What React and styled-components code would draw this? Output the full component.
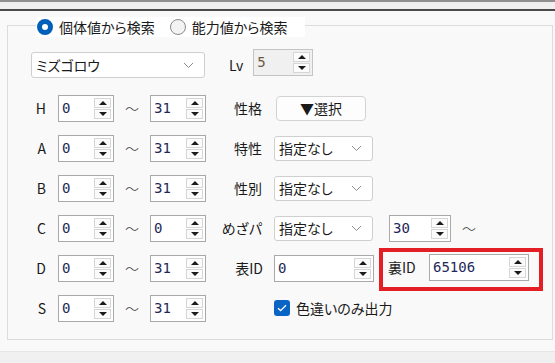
import React from "react";
import styled, { createGlobalStyle } from "styled-components";

const GlobalStyle = createGlobalStyle`
  html, body { margin: 0; padding: 0; background: #f0f0f0; }
  body {
    font-family: "Noto Sans CJK JP", "Noto Sans", sans-serif;
    font-size: 14px;
    color: #1a1a1a;
    font-feature-settings: "palt";
  }
  * { box-sizing: border-box; }
`;

const Window = styled.div`
  width: 555px;
  height: 363px;
  display: flex;
  flex-direction: column;
  overflow: hidden;
`;

const TopChrome = styled.div`
  height: 11px;
  background: #efefef;
  border-top: 2px solid #8f8f8f;
  border-bottom: 2px solid #4a4a4a;
`;

const Panel = styled.div`
  height: 340px;
  background: #f9f9f9;
  padding: 14px 2px 0 7px;
`;

const StatusStrip = styled.div`
  flex: 1;
  border-top: 1px solid #e6e6e6;
  background: #f0f0f0;
`;

const GroupBox = styled.div`
  position: relative;
  height: 315px;
  border: 1px solid #dcdcdc;
  padding: 19px 0 0 23px;
`;

const Legend = styled.div`
  position: absolute;
  left: 28px;
  top: -9px;
  height: 20px;
  background: #ffffff;
  display: flex;
  align-items: center;
  padding: 0 18px 0 1px;
`;

const RadioLabel = styled.label`
  display: flex;
  align-items: center;
  gap: 6px;
  margin-right: ${(p) => (p.$last ? 0 : 15)}px;
  line-height: 1;
  white-space: nowrap;
`;

const RadioCircle = styled.span`
  width: 16px;
  height: 16px;
  border-radius: 50%;
  flex: none;
  ${(p) =>
    p.$checked
      ? `background: #fff; border: 5px solid #005fb8;`
      : `background: #f3f3f3; border: 1px solid #8a8a8a;`}
`;

const SpeciesRow = styled.div`
  height: 40px;
  display: flex;
  align-items: center;
`;

const LvLabel = styled.span`
  margin: 0 10px 0 24px;
  line-height: 1;
`;

const StatGrid = styled.div`
  margin-top: 3px;
  display: grid;
  grid-template-columns: 27px 56px 36px 56px 68px 99px auto;
  grid-auto-rows: 40px;
  align-items: center;
`;

const RowLabel = styled.span`
  justify-self: end;
  padding-right: ${(p) => p.$pad ?? 12}px;
  line-height: 1;
  white-space: nowrap;
`;

const Tilde = styled.span`
  justify-self: center;
  line-height: 1;
  font-size: 14px;
  font-weight: 300;
  color: #2a2a2a;
  margin-left: ${(p) => p.$ml ?? 0}px;
`;

const SpinBox = styled.div`
  display: flex;
  width: ${(p) => p.$w}px;
  height: 27px;
  border: 1px solid ${(p) => (p.$disabled ? "#c4c4c4" : "#a9a9a9")};
  background: ${(p) => (p.$disabled ? "#f0f0f0" : "#ffffff")};
  margin-left: ${(p) => p.$ml ?? 0}px;
  margin-bottom: ${(p) => p.$mb ?? 0}px;
`;

const SpinValue = styled.span`
  flex: 1;
  padding: 4px 0 0 3px;
  font-family: "DejaVu Sans Mono", "Liberation Mono", monospace;
  font-size: 14px;
  line-height: 16px;
  color: ${(p) => (p.$disabled ? "#6b5a40" : "#23285a")};
  font-feature-settings: normal;
`;

const SpinButtons = styled.div`
  display: flex;
  flex-direction: column;
  gap: 1px;
  padding: 2px 2px 2px 0;
`;

const SpinBtn = styled.span`
  width: 17px;
  height: 10px;
  border: 1px solid #d6d6d6;
  background: #fbfbfb;
  display: flex;
  align-items: center;
  justify-content: center;
  &::after {
    content: "";
    width: 0;
    height: 0;
    border-left: 4px solid transparent;
    border-right: 4px solid transparent;
    ${(p) =>
      p.$down
        ? "border-top: 4px solid #1a1a1a;"
        : "border-bottom: 4px solid #1a1a1a;"}
  }
`;

const Spinner = ({ value, w = 56, disabled, ml, mb }) => (
  <SpinBox $w={w} $disabled={disabled} $ml={ml} $mb={mb}>
    <SpinValue $disabled={disabled}>{value}</SpinValue>
    <SpinButtons>
      <SpinBtn />
      <SpinBtn $down />
    </SpinButtons>
  </SpinBox>
);

const ComboBox = styled.div`
  width: ${(p) => p.$w}px;
  height: ${(p) => p.$h}px;
  border: 1px solid #cfcfcf;
  border-radius: 3px;
  background: #ffffff;
  display: flex;
  align-items: center;
  justify-content: space-between;
  padding: 0 10px 0 4px;
  line-height: 1;
  white-space: nowrap;
`;

const Chevron = () => (
  <svg width="11" height="7" viewBox="0 0 11 7">
    <path d="M1 1l4.5 4.5L10 1" fill="none" stroke="#8a8a8a" strokeWidth="1" />
  </svg>
);

const Combo = ({ text, w = 99, h = 25 }) => (
  <ComboBox $w={w} $h={h}>
    <span>{text}</span>
    <Chevron />
  </ComboBox>
);

const PushButton = styled.div`
  margin-left: 2px;
  width: 90px;
  height: 25px;
  border: 1px solid #d3d3d3;
  border-radius: 4px;
  background: #fdfdfd;
  display: flex;
  align-items: center;
  justify-content: center;
  line-height: 1;
`;

const Extra = styled.div`
  display: flex;
  align-items: center;
  align-self: ${(p) => (p.$start ? "start" : "center")};
`;

const Highlight = styled.div`
  margin-left: 6px;
  width: 164px;
  height: 43px;
  border: 4px solid #e31e24;
  display: flex;
  align-items: flex-start;
  padding: 2px 0 0 5px;
`;

const HighlightLabel = styled.span`
  width: 41px;
  line-height: 27px;
`;

const CheckRow = styled.label`
  grid-column: 6 / 8;
  display: flex;
  align-items: center;
  gap: 6px;
  line-height: 1;
  white-space: nowrap;
`;

const CheckBox = styled.span`
  width: 16px;
  height: 16px;
  border-radius: 3px;
  background: #0a64c4;
  display: flex;
  align-items: center;
  justify-content: center;
`;

const stats = [
  { k: "H", max: "31" },
  { k: "A", max: "31" },
  { k: "B", max: "31" },
  { k: "C", max: "0" },
  { k: "D", max: "31" },
  { k: "S", max: "31" },
];

export default function App() {
  const right = [
    <>
      <RowLabel $pad={12}>性格</RowLabel>
      <PushButton>▼選択</PushButton>
      <span />
    </>,
    <>
      <RowLabel $pad={12}>特性</RowLabel>
      <Combo text="指定なし" />
      <span />
    </>,
    <>
      <RowLabel $pad={12}>性別</RowLabel>
      <Combo text="指定なし" />
      <span />
    </>,
    <>
      <RowLabel $pad={12}>めざパ</RowLabel>
      <Combo text="指定なし" />
      <Extra>
        <Spinner value="30" w={62} ml={16} />
        <Tilde $ml={11}>～</Tilde>
      </Extra>
    </>,
    <>
      <RowLabel $pad={11}>表ID</RowLabel>
      <Spinner value="0" w={100} />
      <Extra $start>
        <Highlight>
          <HighlightLabel>裏ID</HighlightLabel>
          <Spinner value="65106" w={100} />
        </Highlight>
      </Extra>
    </>,
    <>
      <span />
      <CheckRow>
        <CheckBox>
          <svg width="10" height="8" viewBox="0 0 10 8">
            <path d="M1 4.2l2.6 2.4L9 1.2" fill="none" stroke="#fff" strokeWidth="1.3" />
          </svg>
        </CheckBox>
        色違いのみ出力
      </CheckRow>
    </>,
  ];

  return (
    <>
      <GlobalStyle />
      <Window>
        <TopChrome />
        <Panel>
          <GroupBox>
            <Legend>
              <RadioLabel>
                <RadioCircle $checked />
                個体値から検索
              </RadioLabel>
              <RadioLabel $last>
                <RadioCircle />
                能力値から検索
              </RadioLabel>
            </Legend>
            <SpeciesRow>
              <Combo text="ミズゴロウ" w={174} h={26} />
              <LvLabel>Lv</LvLabel>
              <Spinner value="5" w={60} disabled mb={5} />
            </SpeciesRow>
            <StatGrid>
              {stats.map((s, i) => (
                <React.Fragment key={s.k}>
                  <RowLabel>{s.k}</RowLabel>
                  <Spinner value="0" />
                  <Tilde>～</Tilde>
                  <Spinner value={s.max} />
                  {right[i]}
                </React.Fragment>
              ))}
            </StatGrid>
          </GroupBox>
        </Panel>
        <StatusStrip />
      </Window>
    </>
  );
}
